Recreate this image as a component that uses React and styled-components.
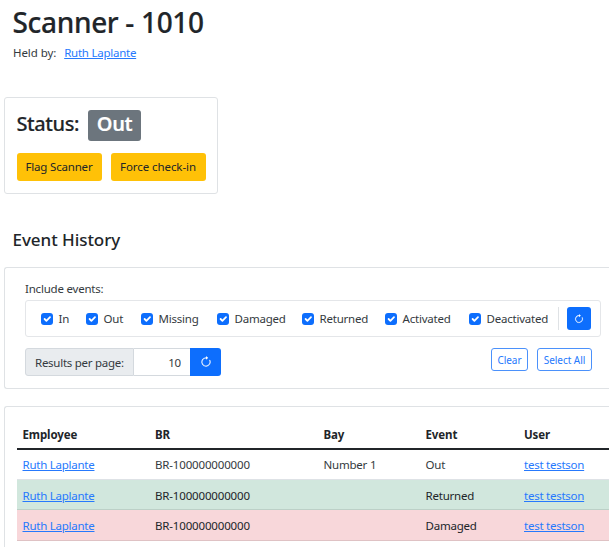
import React from 'react';
import styled, { createGlobalStyle } from 'styled-components';

const GlobalStyle = createGlobalStyle`
  *, *::before, *::after { box-sizing: border-box; }
  body {
    margin: 0;
    overflow: hidden;
    background: #fff;
    color: #343a40;
    font: 400 11.5px/18px "Noto Sans", "Open Sans", sans-serif;
    letter-spacing: -0.21px;
  }
  h1, h2, h3, p { margin: 0; }
  h1, h2, h3 { color: #212529; }
  button, input { font: inherit; letter-spacing: inherit; }
`;

const Page = styled.main`
  height: 547px;
  overflow: hidden;
  padding: 5px 0 0 4px;
  white-space: nowrap;
`;

const Title = styled.h1`
  padding-left: 8.5px;
  font-size: 28px;
  font-weight: 500;
  line-height: 34px;
  letter-spacing: -0.33px;
  -webkit-text-stroke: 0.2px #212529;
`;

const HeldBy = styled.p`
  display: flex;
  gap: 8px;
  padding: 5px 0 1px 9px;
  letter-spacing: -0.08px;
`;

const Link = styled.a`
  color: #2679fd;
  text-decoration: underline;
  letter-spacing: -0.25px;
`;

const Card = styled.section`
  border: 1px solid #dfe2e5;
  border-radius: 3px;
`;

const StatusCard = styled(Card)`
  width: 214px;
  height: 97px;
  margin-top: 34px;
  padding: 12px 0 0 11.5px;
`;

const StatusLine = styled.h2`
  display: flex;
  align-items: flex-start;
  gap: 9px;
  font-size: 20px;
  font-weight: 500;
  line-height: 27px;
  letter-spacing: -0.42px;
  -webkit-text-stroke: 0.15px currentColor;
`;

const Badge = styled.span`
  width: 53px;
  height: 31px;
  border-radius: 3px;
  background: #6c757d;
  color: #fff;
  font-weight: 600;
  line-height: 28px;
  letter-spacing: -0.4px;
  text-align: center;
`;

const WarningActions = styled.div`
  display: flex;
  gap: 9px;
  margin-top: 12px;
`;

const WarningButton = styled.button`
  width: ${(p) => p.$width}px;
  height: 28px;
  padding: 0;
  border: 0;
  border-radius: 3px;
  background: #ffc107;
  color: #212529;
  letter-spacing: ${(p) => p.$tracking}px;
`;

const SectionTitle = styled.h3`
  padding: 34px 0 1px 8.5px;
  font-size: 17px;
  font-weight: 500;
  line-height: 24px;
  letter-spacing: -0.05px;
`;

const FilterCard = styled(Card)`
  height: 122px;
  margin-top: 14px;
  padding: 12px 0 0 20px;
  border-right: 0;
  border-radius: 3px 0 0 3px;
`;

const EventFilters = styled.div`
  display: flex;
  align-items: center;
  width: 576px;
  height: 37px;
  margin-top: 2px;
  padding-left: 15px;
  border: 1px solid #e4e6e9;
  border-radius: 3px;
`;

const CheckLabel = styled.label`
  display: flex;
  flex: 0 0 ${(p) => p.$width}px;
  align-items: center;
  gap: 5.5px;
`;

const CheckBox = styled.svg`
  flex: none;
  width: 12px;
  height: 12px;
  border-radius: 3px;
  background: #0d6efd;
`;

const Divider = styled.span`
  width: 1px;
  height: 23px;
  margin-right: 8px;
  background: #dfe2e5;
`;

const PrimaryButton = styled.button`
  display: flex;
  align-items: center;
  justify-content: center;
  width: ${(p) => (p.$joined ? 31 : 24)}px;
  height: ${(p) => (p.$joined ? 28 : 23)}px;
  padding: 0;
  border: 0;
  border-radius: ${(p) => (p.$joined ? '0 3px 3px 0' : '3px')};
  background: #0d6efd;
  color: #fff;
`;

const ControlRow = styled.div`
  display: flex;
  justify-content: space-between;
  width: 567px;
  margin-top: 11px;
`;

const InputGroup = styled.div`
  display: flex;
  height: 28px;
`;

const InputLabel = styled.label`
  width: 109px;
  height: 28px;
  padding-left: 9px;
  border: 1px solid #d4d9de;
  border-radius: 3px 0 0 3px;
  background: #e9ecef;
  line-height: 27px;
  letter-spacing: -0.26px;
`;

const PageInput = styled.input`
  width: 56px;
  height: 28px;
  padding: 1px 9px 0;
  border: 1px solid #d4d9de;
  border-width: 1px 0;
  border-radius: 0;
  background: #fff;
  color: #343a40;
  text-align: right;
  outline: 0;
`;

const OutlineActions = styled.div`
  display: flex;
  gap: 9px;
`;

const OutlineButton = styled.button`
  width: ${(p) => p.$width}px;
  height: 23px;
  padding: 0;
  border: 1px solid #4b91fb;
  border-radius: 3px;
  background: #fff;
  color: #2679fd;
  font-size: 10px;
  line-height: 20px;
  letter-spacing: -0.04px;
`;

const TableCard = styled(Card)`
  height: 160px;
  margin-top: 17px;
  padding: 12px 0 0 12px;
  border-right: 0;
  border-radius: 3px 0 0 3px;
`;

const TableRow = styled.div`
  display: grid;
  grid-template-columns: 132.5px 168.5px 102px 98.5px 1fr;
  align-items: center;
  height: ${(p) => p.$height || 30}px;
  padding: ${(p) => (p.$tone ? 2 : 0)}px 0 0 5.5px;
  border-bottom: 1px solid ${(p) => p.$line || '#dee2e6'};
  background: ${(p) => p.$tone || '#fff'};
  color: ${(p) => (p.$tone ? '#212529' : '#343a40')};
`;

const HeaderRow = styled(TableRow)`
  height: 31px;
  padding-top: 2px;
  border-bottom: 2px solid #212529;
  color: #212529;
  font-weight: 700;
  letter-spacing: -0.1px;
`;

const Code = styled.span`
  letter-spacing: -0.16px;
`;

function Refresh({ size }) {
  return (
    <svg width={size} height={size} viewBox="0 0 16 16" fill="currentColor" aria-hidden="true">
      <path fillRule="evenodd" d="M8 3a5 5 0 1 0 4.546 2.914.5.5 0 0 1 .908-.417A6 6 0 1 1 8 2v1z" stroke="currentColor" strokeWidth=".35" />
      <path d="M8 4.466V.534a.25.25 0 0 1 .41-.192l2.36 1.966c.12.1.12.284 0 .384L8.41 4.658A.25.25 0 0 1 8 4.466z" />
    </svg>
  );
}

const events = [
  ['In', 45], ['Out', 55], ['Missing', 76], ['Damaged', 85],
  ['Returned', 83], ['Activated', 84], ['Deactivated', 89],
];

const history = [
  { bay: 'Number 1', event: 'Out' },
  { event: 'Returned', tone: '#d1e7dd', line: '#bcd0c7' },
  { event: 'Damaged', tone: '#f8d7da', line: '#dfc2c4', height: 31 },
];

export default function App() {
  return (
    <>
      <GlobalStyle />
      <Page>
        <Title>Scanner - 1010</Title>
        <HeldBy>Held by: <Link>Ruth Laplante</Link></HeldBy>

        <StatusCard>
          <StatusLine>Status: <Badge>Out</Badge></StatusLine>
          <WarningActions>
            <WarningButton $width={85} $tracking={-0.19}>Flag Scanner</WarningButton>
            <WarningButton $width={95} $tracking={-0.07}>Force check-in</WarningButton>
          </WarningActions>
        </StatusCard>

        <SectionTitle>Event History</SectionTitle>

        <FilterCard>
          <p>Include events:</p>
          <EventFilters>
            {events.map(([name, width]) => (
              <CheckLabel key={name} $width={width}>
                <CheckBox viewBox="0 0 20 20">
                  <path fill="none" stroke="#fff" strokeLinecap="round" strokeLinejoin="round" strokeWidth="3" d="m6 10 3 3 6-6" />
                </CheckBox>
                {name}
              </CheckLabel>
            ))}
            <Divider />
            <PrimaryButton aria-label="Refresh events"><Refresh size={10} /></PrimaryButton>
          </EventFilters>
          <ControlRow>
            <InputGroup>
              <InputLabel htmlFor="per-page">Results per page:</InputLabel>
              <PageInput id="per-page" defaultValue="10" />
              <PrimaryButton $joined aria-label="Apply page size"><Refresh size={12} /></PrimaryButton>
            </InputGroup>
            <OutlineActions>
              <OutlineButton $width={37}>Clear</OutlineButton>
              <OutlineButton $width={55}>Select All</OutlineButton>
            </OutlineActions>
          </ControlRow>
        </FilterCard>

        <TableCard>
          <HeaderRow>
            <span>Employee</span><span>BR</span><span>Bay</span><span>Event</span><span>User</span>
          </HeaderRow>
          {history.map((row) => (
            <TableRow key={row.event} $tone={row.tone} $line={row.line} $height={row.height}>
              <span><Link>Ruth Laplante</Link></span>
              <Code>BR-100000000000</Code>
              <span>{row.bay}</span>
              <span>{row.event}</span>
              <span><Link>test testson</Link></span>
            </TableRow>
          ))}
        </TableCard>
      </Page>
    </>
  );
}
